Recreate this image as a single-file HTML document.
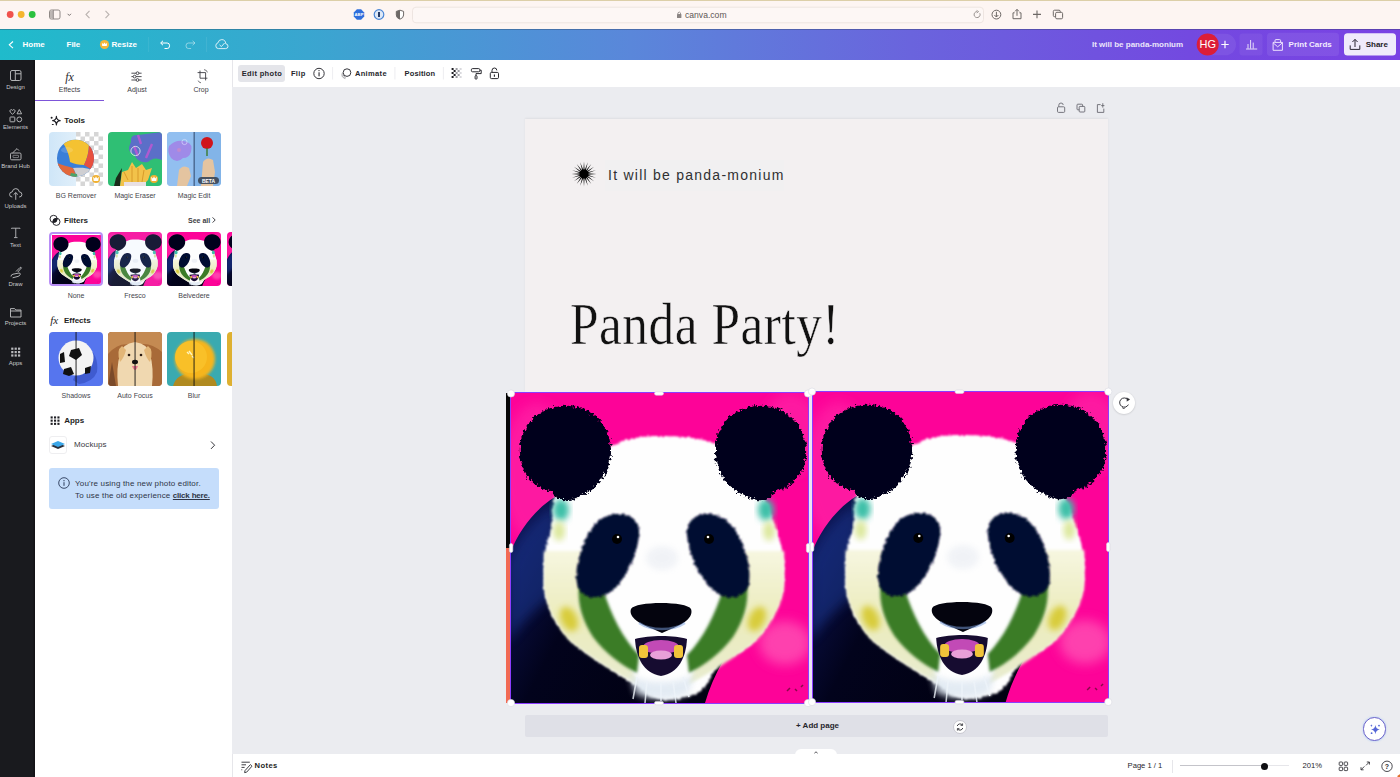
<!DOCTYPE html>
<html><head><meta charset="utf-8">
<style>
*{box-sizing:border-box;margin:0;padding:0}
html,body{width:1400px;height:777px;overflow:hidden;background:#ebecf0;font-family:"Liberation Sans",sans-serif}
.a{position:absolute}
svg{position:absolute;overflow:visible}
#safari{left:0;top:0;width:1400px;height:29px;background:#fdf5f2;border-top:1px solid #dccfa8}
#hdr{left:0;top:29px;width:1400px;height:31px;box-shadow:inset 0 1px 0 rgba(40,60,90,.35);background:linear-gradient(90deg,#1fbbcb 0%,#3aa6d0 22%,#5a87da 45%,#6a64dd 65%,#7349e0 85%,#7a42e4 100%)}
#rail{left:0;top:60px;width:35px;height:717px;background:#191a1e;box-shadow:inset -1.5px 0 0 #131216}
#panel{left:35px;top:60px;width:197px;height:717px;background:#fff}
#ctx{left:232px;top:60px;width:1168px;height:27px;background:#fff;border-left:1px solid #e6e6ea}
#bottom{left:232px;top:754px;width:1168px;height:23px;background:#fff;border-left:1px solid #e6e6ea}
#page{left:525px;top:119px;width:583px;height:273px;background:#f3f0f1;box-shadow:0 -1px 2px rgba(0,0,0,.06)}
.t{position:absolute;white-space:nowrap;line-height:1}
.hw{color:#fff;font-weight:bold;font-size:8px}
.rl{color:#c9cacd;font-size:6px;text-align:center;width:31px;left:0}
.tab{color:#3d3d44;font-size:7px;text-align:center}
.h{color:#1e1e24;font-weight:bold;font-size:8px}
.lb{color:#45454c;font-size:7px;text-align:center;width:54px}
.th{position:absolute;width:54px;height:54px;border-radius:4px;overflow:hidden}
.tb{color:#26262c;font-weight:bold;font-size:7.5px;letter-spacing:0.35px}
</style></head><body>
<svg width="0" height="0" style="position:absolute;left:0;top:0">
<defs>
 <filter id="fur" x="-15%" y="-15%" width="130%" height="130%"><feTurbulence type="fractalNoise" baseFrequency="0.35" numOctaves="2" seed="3" result="n"/><feDisplacementMap in="SourceGraphic" in2="n" scale="7" xChannelSelector="R" yChannelSelector="G"/><feGaussianBlur stdDeviation="0.7"/></filter>
 <filter id="fur2" x="-15%" y="-15%" width="130%" height="130%"><feTurbulence type="fractalNoise" baseFrequency="0.3" numOctaves="2" seed="5" result="n"/><feDisplacementMap in="SourceGraphic" in2="n" scale="4" xChannelSelector="R" yChannelSelector="G"/><feGaussianBlur stdDeviation="1"/></filter>
 <filter id="fz" x="-10%" y="-10%" width="120%" height="120%"><feGaussianBlur stdDeviation="1.6"/></filter>
 <filter id="fz2" x="-20%" y="-20%" width="140%" height="140%"><feGaussianBlur stdDeviation="3"/></filter>
 <filter id="fz6" x="-30%" y="-30%" width="160%" height="160%"><feGaussianBlur stdDeviation="6"/></filter>
 <linearGradient id="bodyG" x1="0" y1="0" x2="1" y2="0.5">
  <stop offset="0" stop-color="#121c66"/><stop offset="0.15" stop-color="#0a1048"/><stop offset="0.45" stop-color="#02031c"/><stop offset="1" stop-color="#010112"/>
 </linearGradient>
 <linearGradient id="chkL" x1="0" y1="0" x2="0.6" y2="1">
  <stop offset="0" stop-color="#eef0c0"/><stop offset="0.35" stop-color="#dcd878"/><stop offset="0.55" stop-color="#b8c040"/><stop offset="0.75" stop-color="#3f8a2c"/><stop offset="1" stop-color="#d8e8c8"/>
 </linearGradient>
 <linearGradient id="chkR" x1="1" y1="0" x2="0.4" y2="1">
  <stop offset="0" stop-color="#eef0c0"/><stop offset="0.35" stop-color="#dcd878"/><stop offset="0.55" stop-color="#b8c040"/><stop offset="0.75" stop-color="#3f8a2c"/><stop offset="1" stop-color="#d8e8c8"/>
 </linearGradient>
 <linearGradient id="paleG" x1="0" y1="0" x2="0" y2="1">
  <stop offset="0" stop-color="#f6f6e0"/><stop offset="0.5" stop-color="#ececbc"/><stop offset="1" stop-color="#e8ecd0"/>
 </linearGradient>
 <symbol id="panda" viewBox="0 0 297 310" preserveAspectRatio="none">
  <rect width="297" height="310" fill="#fd0398"/>
  <ellipse cx="26" cy="80" rx="36" ry="70" fill="#ff34ac" filter="url(#fz6)" opacity=".45"/>
  <ellipse cx="280" cy="40" rx="30" ry="40" fill="#ff34ac" filter="url(#fz6)" opacity=".45"/>
  <ellipse cx="274" cy="250" rx="26" ry="22" fill="#ff5cb8" filter="url(#fz6)" opacity=".7"/>
  <!-- body -->
  <path d="M0,158 C8,138 24,116 44,104 L140,240 L205,250 L212,268 C204,282 198,296 194,310 L0,310 Z" fill="url(#bodyG)"/>
  <clipPath id="bodyClip"><path d="M0,158 C8,138 24,116 44,104 L140,240 L205,250 L212,268 C204,282 198,296 194,310 L0,310 Z"/></clipPath>
  <g clip-path="url(#bodyClip)"><path d="M-4,170 C6,146 24,122 46,110 L46,200 C30,210 10,230 -4,250 Z" fill="#2444a8" filter="url(#fz6)" opacity=".45"/></g>
  <!-- face -->
  <path d="M43,106 C60,70 80,56 98,54 C115,45 130,43 149,43 C175,43 195,46 208,52 C235,68 255,100 262,128 C270,145 274,165 273,185 C272,205 266,218 258,228 C248,248 230,262 208,268 C202,280 198,290 190,298 C175,306 160,308 148,306 C138,304 132,300 128,294 C112,284 84,268 58,247 C45,232 36,215 33,195 C32,170 34,150 40,138 C41,125 42,115 43,106 Z" fill="#fefefe" filter="url(#fur2)"/>
  <!-- cheeks -->
  <path d="M33,158 L72,158 C76,190 88,225 110,255 L128,292 C112,284 84,268 58,247 C45,232 36,215 33,195 Z" fill="url(#paleG)" filter="url(#fz)"/>
  <path d="M273,158 L232,158 C228,190 216,225 194,255 L176,292 C192,284 220,268 246,247 C259,232 270,215 273,195 Z" fill="url(#paleG)" filter="url(#fz)"/>
  <ellipse cx="58" cy="226" rx="8" ry="13" fill="#d8cc3a" filter="url(#fz2)" transform="rotate(-25 58 226)"/>
  <ellipse cx="246" cy="226" rx="8" ry="13" fill="#d8cc3a" filter="url(#fz2)" transform="rotate(25 246 226)"/>
  <path d="M68,192 L92,196 C100,222 112,246 128,262 L126,280 C110,272 94,260 82,244 C72,228 66,212 68,192 Z" fill="#3a7c28" filter="url(#fz)"/>
  <path d="M236,192 L212,196 C204,222 192,246 176,262 L178,280 C194,272 210,260 222,244 C232,228 238,212 236,192 Z" fill="#3a7c28" filter="url(#fz)"/>
  <ellipse cx="50" cy="117" rx="8" ry="11" fill="#3cc0a8" filter="url(#fz2)"/>
  <ellipse cx="48" cy="138" rx="6" ry="10" fill="#dce89c" filter="url(#fz2)"/>
  <ellipse cx="255" cy="117" rx="8" ry="11" fill="#3cc0a8" filter="url(#fz2)"/>
  <ellipse cx="258" cy="138" rx="6" ry="10" fill="#dce89c" filter="url(#fz2)"/>
  <!-- ears -->
  <path d="M9,62 C7,32 30,11 58,13 C84,15 100,34 100,58 C100,80 86,98 62,106 C50,110 44,104 40,98 C22,94 11,82 9,62 Z" fill="#04041a" filter="url(#fur)"/>
  <path d="M295,62 C297,32 274,11 246,13 C220,15 204,34 204,58 C204,80 218,98 242,106 C254,110 260,104 264,98 C282,94 293,82 295,62 Z" fill="#04041a" filter="url(#fur)"/>
  <!-- eye patches -->
  <path d="M100,122 C116,118 130,126 128,142 C126,162 116,186 98,200 C88,207 72,206 67,194 C62,178 70,150 82,134 C88,126 94,123 100,122 Z" fill="#050830" filter="url(#fur2)"/>
  <path d="M204,122 C188,118 174,126 176,142 C178,162 188,186 206,200 C216,207 232,206 237,194 C242,178 234,150 222,134 C216,126 210,123 204,122 Z" fill="#050830" filter="url(#fur2)"/>
  <circle cx="106" cy="146" r="5" fill="#000"/><circle cx="107" cy="144" r="1.3" fill="#fff"/>
  <circle cx="198" cy="146" r="5" fill="#000"/><circle cx="197" cy="144" r="1.3" fill="#fff"/>
  <!-- muzzle shading -->
  <ellipse cx="151" cy="165" rx="16" ry="12" fill="#e4e8f0" filter="url(#fz2)" opacity=".5"/>
  <!-- nose -->
  <path d="M120,216 C124,208 176,208 180,216 C183,224 172,232 160,236 L151,240 L142,236 C130,232 117,224 120,216 Z" fill="#04040e"/>
  <path d="M128,230 C140,238 162,238 174,230" fill="none" stroke="#7aa0e0" stroke-width="2.5" opacity=".5"/>
  <!-- mouth -->
  <path d="M124,246 C138,242 164,242 176,246 C175,264 168,280 150,283 C132,280 125,264 124,246 Z" fill="#160c30"/>
  <ellipse cx="150" cy="254" rx="18" ry="7" fill="#c24ab6"/>
  <rect x="128" y="252" width="9" height="13" rx="3" fill="#f0c43a"/>
  <rect x="163" y="252" width="9" height="13" rx="3" fill="#f0c43a"/>
  <ellipse cx="150" cy="262" rx="11" ry="4.5" fill="#e8a0d8"/>
  <path d="M118,280 C130,292 170,292 184,280 L178,300 C165,308 135,308 124,300 Z" fill="#dfe8f2" filter="url(#fz2)" opacity=".85"/>
  <path d="M126,284 L122,306 M136,288 L134,310 M150,290 L150,308 M162,288 L165,310 M172,284 L178,304" stroke="#eef4fa" stroke-width="1.6" opacity=".8"/>
  <path d="M276,298 l3,-3 M284,296 l2,2 M290,294 l2,-2" stroke="#8a0848" stroke-width="1.5"/>
 </symbol>
</defs>
</svg>

<!-- SAFARI -->
<div id="safari" class="a"></div>
<svg width="1400" height="29" style="left:0;top:0">
 <circle cx="10.2" cy="14.5" r="3.4" fill="#f0524d"/>
 <circle cx="21.2" cy="14.5" r="3.4" fill="#f4b52e"/>
 <circle cx="32.2" cy="14.5" r="3.4" fill="#2bc13f"/>
 <rect x="49.5" y="10" width="10.5" height="9" rx="1.8" fill="none" stroke="#8e8885" stroke-width="1"/>
 <rect x="50" y="10.5" width="3" height="8" fill="#bdb7b4"/>
 <line x1="53.3" y1="10" x2="53.3" y2="19" stroke="#8e8885" stroke-width="1"/>
 <path d="M67.6 13.8 L69.3 15.5 L71 13.8" fill="none" stroke="#7a7472" stroke-width="1"/>
 <path d="M89.5 10.8 L86 14.5 L89.5 18.2" fill="none" stroke="#bab3b0" stroke-width="1.1"/>
 <path d="M105.5 10.8 L109 14.5 L105.5 18.2" fill="none" stroke="#bab3b0" stroke-width="1.1"/>
 <polygon points="356.9,9.3 361.1,9.3 364.2,12.4 364.2,16.6 361.1,19.7 356.9,19.7 353.8,16.6 353.8,12.4" fill="#2f6fdc"/>
 <text x="359" y="16.1" font-size="4.2" font-weight="bold" fill="#fff" text-anchor="middle" font-family="Liberation Sans">ABP</text>
 <circle cx="379" cy="14.5" r="4.8" fill="#dde8f7" stroke="#4a86d6" stroke-width="1.2"/>
 <rect x="378" y="12" width="2" height="5" fill="#243a66"/>
 <path d="M396.3 11.4 L400 10.2 L403.6 11.4 L403.6 15 Q403.6 18 400 19.2 Q396.3 18 396.3 15 Z" fill="#fff" stroke="#6d6866" stroke-width="1"/>
 <path d="M396.3 11.4 L400 10.2 L400 19.2 Q396.3 18 396.3 15 Z" fill="#6d6866"/>
 <rect x="412.5" y="7.2" width="571" height="15.6" rx="3.5" fill="#fdf7f5" stroke="#ece3df" stroke-width="0.9"/>
 <rect x="677" y="13.9" width="4.4" height="4" rx="0.5" fill="#8a8482"/>
 <path d="M677.9 14 V12.9 Q679.2 11 680.5 12.9 V14" fill="none" stroke="#8a8482" stroke-width="0.8"/>
 <path d="M979.8 13.3 A3 3 0 1 1 977 11.6" fill="none" stroke="#8e8885" stroke-width="0.9"/>
 <path d="M976.6 10.4 L978.6 11.6 L976.8 13" fill="none" stroke="#8e8885" stroke-width="0.8"/>
 <circle cx="996.4" cy="14.6" r="4.4" fill="none" stroke="#6d6866" stroke-width="1"/>
 <path d="M996.4 11.8 V17 M994.4 15 L996.4 17 L998.4 15" fill="none" stroke="#6d6866" stroke-width="1"/>
 <path d="M1014.6 12.8 H1013 V18.7 H1021 V12.8 H1019.4" fill="none" stroke="#6d6866" stroke-width="1"/>
 <path d="M1017 15.8 V9.4 M1015 11.4 L1017 9.4 L1019 11.4" fill="none" stroke="#6d6866" stroke-width="1"/>
 <path d="M1033 14.4 H1041 M1037 10.6 V18.2" fill="none" stroke="#6d6866" stroke-width="1.1"/>
 <rect x="1053.3" y="10.2" width="7" height="6.5" rx="1.3" fill="none" stroke="#6d6866" stroke-width="1"/>
 <rect x="1055.6" y="12.3" width="7" height="6.5" rx="1.3" fill="#fdf5f2" stroke="#6d6866" stroke-width="1"/>
</svg>
<div class="t" style="left:685px;top:11.2px;font-size:8.6px;color:#5d5755">canva.com</div>
<!-- HEADER -->
<div id="hdr" class="a"></div>
<svg width="1400" height="31" style="left:0;top:29px">
 <path d="M13 12.5 L9.3 15.8 L13 19.1" fill="none" stroke="#fff" stroke-width="1.1"/>
 <circle cx="104.5" cy="15.5" r="4.6" fill="#f3b73a"/>
 <path d="M102.2 17 L101.9 13.9 L103.4 15 L104.5 13.4 L105.6 15 L107.1 13.9 L106.8 17 Z" fill="#fff"/>
 <line x1="148.6" y1="8" x2="148.6" y2="23" stroke="rgba(255,255,255,.1)" stroke-width="0.8"/>
 <path d="M161 14 H167.2 Q169.6 14 169.6 16.8 Q169.6 19.5 167.2 19.5 H164.5" fill="none" stroke="#fff" stroke-width="1"/>
 <path d="M163 11.8 L160.6 14 L163 16.2" fill="none" stroke="#fff" stroke-width="1"/>
 <path d="M194.6 14 H188.4 Q186 14 186 16.8 Q186 19.5 188.4 19.5 H191.1" fill="none" stroke="rgba(255,255,255,.45)" stroke-width="1"/>
 <path d="M192.6 11.8 L195 14 L192.6 16.2" fill="none" stroke="rgba(255,255,255,.45)" stroke-width="1"/>
 <line x1="206.5" y1="8" x2="206.5" y2="23" stroke="rgba(255,255,255,.1)" stroke-width="0.8"/>
 <path d="M218.5 19.6 H225.6 Q228 19.6 228 17.2 Q228 15 225.8 14.8 Q225.4 10.6 221.8 10.6 Q218.6 10.6 218 13.8 Q215.8 14.3 215.8 16.8 Q215.8 19.6 218.5 19.6 Z" fill="none" stroke="rgba(255,255,255,.85)" stroke-width="0.95"/>
 <path d="M219.5 15.8 L221.4 17.6 L224.6 14" fill="none" stroke="rgba(255,255,255,.85)" stroke-width="0.95"/>
 <rect x="1199" y="4.8" width="37" height="21.5" rx="10.7" fill="rgba(255,255,255,.07)"/>
 <circle cx="1207.7" cy="15.5" r="11" fill="#dc1d38"/>
 <path d="M1221.3 15.5 H1228.7 M1225 11.8 V19.2" stroke="#fff" stroke-width="1.2"/>
 <rect x="1239.5" y="4.5" width="23" height="22" rx="3" fill="rgba(255,255,255,.06)"/>
 <path d="M1246 20 H1257.2 M1248 19.6 V15 M1250.6 19.6 V11 M1253.2 19.6 V13.6" fill="none" stroke="rgba(255,255,255,.85)" stroke-width="0.95"/>
 <rect x="1267" y="3.8" width="72" height="23.2" rx="3.5" fill="rgba(255,255,255,.08)"/>
 <path d="M1274.6 13.4 H1282.4 V21.3 H1273.1 V13.4 Z M1273.1 13.8 L1277.7 17.8 L1282.4 13.8" fill="none" stroke="#f2e8ff" stroke-width="0.95"/>
 <path d="M1275 13.2 V11.6 Q1275 10.6 1276 10.6 H1279.6 Q1280.6 10.6 1280.6 11.6 V13.2" fill="none" stroke="#f2e8ff" stroke-width="0.95"/>
 <rect x="1344" y="4.3" width="52" height="22.3" rx="3.5" fill="#f0eafb"/>
 <path d="M1350.2 16.4 V20.4 H1359.8 V16.4" fill="none" stroke="#2a2533" stroke-width="1"/>
 <path d="M1355 18 V10.4 M1352.4 13 L1355 10.4 L1357.6 13" fill="none" stroke="#2a2533" stroke-width="1"/>
</svg>
<div class="t hw" style="left:22.5px;top:40.6px">Home</div>
<div class="t hw" style="left:66.5px;top:40.6px">File</div>
<div class="t hw" style="left:111.5px;top:40.6px">Resize</div>
<div class="t hw" style="left:1092px;top:40.6px;color:#ece6fb">It will be panda-monium</div>
<div class="t" style="left:1197px;top:39.3px;width:21.5px;text-align:center;color:#fff;font-size:11px">HG</div>
<div class="t hw" style="left:1288.6px;top:40.6px;color:#f3ecff">Print Cards</div>
<div class="t hw" style="left:1365.7px;top:40.6px;color:#1f1b28">Share</div>
<!-- RAIL -->
<div id="rail" class="a"></div>
<svg width="35" height="300" style="left:0;top:60px">
 <g fill="none" stroke="#b9babd" stroke-width="0.95">
  <rect x="10.5" y="10.5" width="10.5" height="10" rx="1.5"/>
  <path d="M15.3 10.5 V20.5 M15.3 13.8 H21"/>
  <g transform="translate(0 2)">
  <path d="M12.5 52.3 L10.2 50 Q9.4 48.6 10.6 47.8 Q11.8 47.2 12.5 48.4 Q13.2 47.2 14.4 47.8 Q15.6 48.6 14.8 50 Z"/>
  <path d="M19.3 47.5 L21.6 51.8 H17 Z"/>
  <rect x="10" y="55" width="4.8" height="4.8" rx="0.6"/>
  <circle cx="19.3" cy="57.4" r="2.4"/>
  </g>
  <rect x="10.5" y="93" width="10.5" height="6.8" rx="1.2"/>
  <path d="M12.5 93 L17 88.6 L19 90.6"/>
  <rect x="13" y="95.3" width="5.5" height="2.3" rx="0.4" stroke-width="0.6"/>
  <path d="M12.3 137 Q9.6 137 9.6 134.5 Q9.6 132 12.2 131.9 Q12.8 128.6 15.8 128.6 Q18.8 128.6 19.3 131.9 Q21.9 132 21.9 134.5 Q21.9 137 19.2 137"/>
  <path d="M15.75 139.8 V132.6 M13.6 134.6 L15.75 132.6 L17.9 134.6"/>
  <path d="M11.5 168.8 V168.2 H20 V168.8 M15.75 168.2 V177.6 M14 177.6 H17.5" stroke-width="0.9"/>
  <path d="M11 216.5 Q11 214.5 13 214.2 L19 213 Q20.6 213 20.2 214.6 Q19.6 216 18 216.4 L12.6 217.8" stroke-width="0.95"/>
  <path d="M16 211.5 L20 207.5 Q21 207 21.5 207.8 L17.8 212"/>
  <path d="M10.5 257 V248.6 H14.6 L15.8 250 H21 V257 Z M10.5 251 H21"/>
 </g>
 <g fill="#b9babd">
  <rect x="11.2" y="287.6" width="2.2" height="2.2"/><rect x="14.6" y="287.6" width="2.2" height="2.2"/><rect x="18" y="287.6" width="2.2" height="2.2"/>
  <rect x="11.2" y="291" width="2.2" height="2.2"/><rect x="14.6" y="291" width="2.2" height="2.2"/><rect x="18" y="291" width="2.2" height="2.2"/>
  <rect x="11.2" y="294.4" width="2.2" height="2.2"/><rect x="14.6" y="294.4" width="2.2" height="2.2"/><rect x="18" y="294.4" width="2.2" height="2.2"/>
 </g>
</svg>
<div class="t rl" style="top:83.8px">Design</div>
<div class="t rl" style="top:123.6px">Elements</div>
<div class="t rl" style="top:162.9px">Brand Hub</div>
<div class="t rl" style="top:202.8px">Uploads</div>
<div class="t rl" style="top:241.8px">Text</div>
<div class="t rl" style="top:281px">Draw</div>
<div class="t rl" style="top:320.4px">Projects</div>
<div class="t rl" style="top:360.2px">Apps</div>
<!-- PANEL -->
<div id="panel" class="a"></div>
<div class="a" style="left:35px;top:100px;width:69px;height:1.4px;background:#7d55d9"></div>
<svg width="200" height="380" style="left:35px;top:60px">
 <text x="34.5" y="20.5" font-family="Liberation Serif" font-style="italic" font-size="12" fill="#2a2a30" text-anchor="middle">fx</text>
 <g fill="none" stroke="#3d3d44" stroke-width="0.9">
  <path d="M96.4 13.2 H106.6 M96.4 16.6 H106.6 M96.4 20 H106.6"/>
  <circle cx="102.5" cy="13.2" r="1.4" fill="#fff"/><circle cx="99.6" cy="16.6" r="1.4" fill="#fff"/><circle cx="102.5" cy="20" r="1.4" fill="#fff"/>
  <path d="M162.6 12.6 H170.6 V20.4 M165 10.6 V18.2 H172.4"/>
  <path d="M169 9.6 Q172 10 172.4 12.4 M163.2 20.6 Q163.8 22.6 166 22.8" stroke-width="0.7"/>
 </g>
 <path d="M21.4 56.2 Q21.6 60.4 25.2 60.6 Q21.6 60.8 21.4 65 Q21.2 60.8 17.6 60.6 Q21.2 60.4 21.4 56.2 Z" fill="none" stroke="#1e1e24" stroke-width="1.1" stroke-linejoin="round"/>
 <circle cx="16.6" cy="57.7" r="1" fill="#1e1e24"/><rect x="16.8" y="63.9" width="2" height="1.2" rx="0.6" fill="#1e1e24"/>
 <clipPath id="fc1"><circle cx="18.6" cy="158.9" r="3.6"/></clipPath>
 <circle cx="21.4" cy="161.8" r="3.6" fill="#1e1e24" clip-path="url(#fc1)"/>
 <g fill="none" stroke="#1e1e24" stroke-width="0.95">
  <circle cx="18.6" cy="158.9" r="3.6"/><circle cx="21.4" cy="161.8" r="3.6"/>
 </g>
 <text x="15.2" y="264.2" font-family="Liberation Serif" font-style="italic" font-size="11" fill="#1e1e24">fx</text>
 <g fill="#1e1e24">
  <rect x="15.6" y="356.4" width="2.1" height="2.1"/><rect x="19" y="356.4" width="2.1" height="2.1"/><rect x="22.4" y="356.4" width="2.1" height="2.1"/>
  <rect x="15.6" y="359.6" width="2.1" height="2.1"/><rect x="19" y="359.6" width="2.1" height="2.1"/><rect x="22.4" y="359.6" width="2.1" height="2.1"/>
  <rect x="15.6" y="362.8" width="2.1" height="2.1"/><rect x="19" y="362.8" width="2.1" height="2.1"/><rect x="22.4" y="362.8" width="2.1" height="2.1"/>
 </g>
 <path d="M177.6 157.4 L180.2 160 L177.6 162.6" fill="none" stroke="#2a2a30" stroke-width="0.9"/>
</svg>
<div class="t tab" style="left:50px;width:39px;top:86.3px">Effects</div>
<div class="t tab" style="left:117px;width:40px;top:86.3px">Adjust</div>
<div class="t tab" style="left:181px;width:40px;top:86.3px">Crop</div>
<div class="t h" style="left:64.3px;top:116.8px">Tools</div>
<div class="t h" style="left:64px;top:216.6px">Filters</div>
<div class="t" style="left:188px;top:217px;font-size:7px;color:#3d3d44;font-weight:bold">See all</div>
<div class="t h" style="left:64px;top:316.6px">Effects</div>
<div class="t h" style="left:64.2px;top:416.6px">Apps</div>
<!-- tool thumbs -->
<div class="th" style="left:49px;top:132px;background:linear-gradient(90deg,#cfe6f8 0,#e0effa 50%,#fff 50%)">
 <svg width="54" height="54" style="left:0;top:0">
  <g fill="#d6d6d6">
   <rect x="27" y="0" width="4.5" height="4.5"/><rect x="36" y="0" width="4.5" height="4.5"/><rect x="45" y="0" width="4.5" height="4.5"/>
   <rect x="31.5" y="4.5" width="4.5" height="4.5"/><rect x="40.5" y="4.5" width="4.5" height="4.5"/><rect x="49.5" y="4.5" width="4.5" height="4.5"/>
   <rect x="27" y="9" width="4.5" height="4.5"/><rect x="36" y="9" width="4.5" height="4.5"/><rect x="45" y="9" width="4.5" height="4.5"/>
   <rect x="31.5" y="13.5" width="4.5" height="4.5"/><rect x="40.5" y="13.5" width="4.5" height="4.5"/><rect x="49.5" y="13.5" width="4.5" height="4.5"/>
   <rect x="27" y="18" width="4.5" height="4.5"/><rect x="36" y="18" width="4.5" height="4.5"/><rect x="45" y="18" width="4.5" height="4.5"/>
   <rect x="31.5" y="22.5" width="4.5" height="4.5"/><rect x="40.5" y="22.5" width="4.5" height="4.5"/><rect x="49.5" y="22.5" width="4.5" height="4.5"/>
   <rect x="27" y="27" width="4.5" height="4.5"/><rect x="36" y="27" width="4.5" height="4.5"/><rect x="45" y="27" width="4.5" height="4.5"/>
   <rect x="31.5" y="31.5" width="4.5" height="4.5"/><rect x="40.5" y="31.5" width="4.5" height="4.5"/><rect x="49.5" y="31.5" width="4.5" height="4.5"/>
   <rect x="27" y="36" width="4.5" height="4.5"/><rect x="36" y="36" width="4.5" height="4.5"/><rect x="45" y="36" width="4.5" height="4.5"/>
   <rect x="31.5" y="40.5" width="4.5" height="4.5"/><rect x="40.5" y="40.5" width="4.5" height="4.5"/><rect x="49.5" y="40.5" width="4.5" height="4.5"/>
   <rect x="27" y="45" width="4.5" height="4.5"/><rect x="36" y="45" width="4.5" height="4.5"/><rect x="45" y="45" width="4.5" height="4.5"/>
   <rect x="31.5" y="49.5" width="4.5" height="4.5"/><rect x="40.5" y="49.5" width="4.5" height="4.5"/><rect x="49.5" y="49.5" width="4.5" height="4.5"/>
  </g>
  <clipPath id="ballc"><circle cx="26.5" cy="26.2" r="18.5"/></clipPath>
  <g clip-path="url(#ballc)">
   <rect x="0" y="0" width="54" height="54" fill="#3a7fd8"/>
   <path d="M12,9 C20,3 34,4 40,12 C40,20 38,27 35,33 C30,33 25,32 21,30 C20,22 17,14 12,9 Z" fill="#f4c232"/>
   <path d="M40,12 C46,18 47,30 43,38 C40,36 37,34 35,33 C38,27 40,20 40,12 Z" fill="#e8503e"/>
   <path d="M6,30 C12,33 18,34 24,36 C26,40 28,44 27,48 C16,48 8,40 6,30 Z" fill="#e2683a"/>
   <path d="M24,36 C30,36 36,35 42,38 C40,42 34,46 28,46 C27,42 26,39 24,36 Z" fill="#cfcfd2"/>
   <path d="M22,41 L28,42 L29,48 L20,47 Z" fill="#4aa46a"/>
   <ellipse cx="18" cy="18" rx="6" ry="3" fill="#fff" opacity=".15"/>
  </g>
  <circle cx="47" cy="47" r="4" fill="#f0b030"/>
  <path d="M44.7 49 L44.1 44.8 L45.9 46.4 L47 44.2 L48.1 46.4 L49.9 44.8 L49.3 49 Z" fill="#fff"/>
 </svg>
</div>
<div class="th" style="left:108px;top:132px;background:#2fbf74">
 <svg width="54" height="54" style="left:0;top:0">
  <path d="M23 10 Q22 2 30 3 L54 0 L54 28 Q46 24 40 30 Q30 32 26 22 Q18 20 23 10 Z" fill="#5b6fc8"/>
  <path d="M30 3 L33 12 M44 12 L38 26 M26 14 L30 24" stroke="#b05ad0" stroke-width="2.4"/>
  <circle cx="27.5" cy="19" r="4.6" fill="none" stroke="#e6f6ee" stroke-width="0.8"/>
  <path d="M8 46 L14 36 L12 54 L6 54 Z" fill="#1a2a1a"/>
  <path d="M12 54 L14 40 L20 38 L24 30 L28 36 L34 32 L38 38 L44 36 L40 48 L34 54 Z" fill="#f2c24a"/>
  <path d="M16 40 L20 48 M24 34 L24 50 M30 36 L30 52 M36 38 L34 50" stroke="#d89a2a" stroke-width="1"/>
  <rect x="16" y="50" width="22" height="4" fill="#e8e0e4"/>
  <circle cx="46" cy="47" r="4" fill="#f0b030"/>
  <path d="M43.7 49 L43.1 44.8 L44.9 46.4 L46 44.2 L47.1 46.4 L48.9 44.8 L48.3 49 Z" fill="#fff"/>
 </svg>
</div>
<div class="th" style="left:167px;top:132px;background:#8ec0ee">
 <svg width="54" height="54" style="left:0;top:0">
  <rect x="0" y="0" width="27" height="54" fill="#92bff0"/>
  <rect x="27" y="0" width="27" height="54" fill="#82b4e8"/>
  <path d="M2 14 Q10 6 20 10 Q26 12 24 20 Q22 26 16 26 Q10 32 4 26 Q0 20 2 14 Z" fill="#9f8ae8"/>
  <circle cx="12" cy="18" r="2" fill="#c08ad0"/>
  <circle cx="17.5" cy="10" r="2.6" fill="none" stroke="#e0e0ff" stroke-width="0.6"/>
  <path d="M10 54 L12 38 Q16 32 22 36 L24 44 L20 54 Z" fill="#e4c4a0"/>
  <rect x="26.7" y="0" width="0.8" height="54" fill="#1a2a4a"/>
  <circle cx="40" cy="11" r="6" fill="#d0141a"/>
  <path d="M40 16 V24" stroke="#3a7a30" stroke-width="1.4"/>
  <path d="M34 54 L36 30 Q40 24 46 28 L48 40 L46 54 Z" fill="#e4c4a0"/>
  <rect x="31" y="45" width="21" height="7" rx="3.5" fill="#3c4858" opacity=".92"/>
  <text x="41.5" y="50.6" font-size="5" font-weight="bold" fill="#fff" text-anchor="middle" font-family="Liberation Sans">BETA</text>
 </svg>
</div>
<div class="t lb" style="left:49px;top:191.6px">BG Remover</div>
<div class="t lb" style="left:108px;top:191.6px">Magic Eraser</div>
<div class="t lb" style="left:167px;top:191.6px">Magic Edit</div>
<!-- filter thumbs -->
<div class="th" style="left:49px;top:232px;border-radius:4px;background:#fff;border:2px solid #b88ef6"><svg width="49" height="49" style="left:0.5px;top:0.5px"><use href="#panda" width="49" height="49"/></svg></div>
<div class="th" style="left:108px;top:232px"><svg width="54" height="54" style="left:0;top:0"><use href="#panda" width="54" height="54"/></svg><div class="a" style="left:0;top:0;width:54px;height:54px;background:rgba(200,220,255,.12)"></div></div>
<div class="th" style="left:167px;top:232px"><svg width="54" height="54" style="left:0;top:0"><use href="#panda" width="54" height="54"/></svg></div>
<div class="th" style="left:227px;top:232px;width:5px;border-radius:4px 0 0 4px"><svg width="54" height="54" style="left:0;top:0"><use href="#panda" width="54" height="54"/></svg></div>
<div class="t lb" style="left:49px;top:291.6px">None</div>
<div class="t lb" style="left:108px;top:291.6px">Fresco</div>
<div class="t lb" style="left:167px;top:291.6px">Belvedere</div>
<!-- effect thumbs -->
<div class="th" style="left:49px;top:332px;background:#5675ee">
 <svg width="54" height="54" style="left:0;top:0">
  <path d="M38 16 Q50 22 48 40 Q44 50 30 52 L24 48 Z" fill="#3f5bd0"/>
  <circle cx="27" cy="26" r="17.5" fill="#f4f4f4"/>
  <path d="M22 18 L30 16 L33 23 L27 28 L20 24 Z" fill="#111"/>
  <path d="M11 22 L15 20 L16 30 L11 31 Z" fill="#111"/>
  <path d="M15 37 L22 35 L25 42 L20 44 L14 42 Z" fill="#111"/>
  <path d="M36 36 L42 34 L41 41 L36 42 Z" fill="#111"/>
  <rect x="26.6" y="0" width="0.9" height="54" fill="#111"/>
 </svg>
</div>
<div class="th" style="left:108px;top:332px;background:#b8743a">
 <svg width="54" height="54" style="left:0;top:0">
  <rect x="0" y="0" width="54" height="54" fill="#a86a38"/>
  <path d="M0 0 H54 V20 Q40 8 27 14 Q12 8 0 22 Z" fill="#c48a52"/>
  <path d="M4 30 L0 54 H8 Z" fill="#7a4a2a"/>
  <path d="M10 54 Q8 36 12 22 Q14 12 27 10 Q40 12 42 22 Q46 36 44 54 Z" fill="#f0d8b0"/>
  <path d="M14 14 Q8 18 12 30 Q16 26 18 18 Z M40 14 Q46 18 42 30 Q38 26 36 18 Z" fill="#e2b678"/>
  <circle cx="21" cy="23" r="1.3" fill="#2a1a10"/><circle cx="33" cy="23" r="1.3" fill="#2a1a10"/>
  <ellipse cx="27" cy="30" rx="3" ry="2.2" fill="#111"/>
  <path d="M24 34 Q27 42 30 34 Z" fill="#e87890"/>
  <rect x="26.6" y="0" width="0.9" height="54" fill="#111"/>
 </svg>
</div>
<div class="th" style="left:167px;top:332px;background:#3aaab0">
 <svg width="54" height="54" style="left:0;top:0">
  <path d="M6 54 Q10 40 28 42 Q48 40 50 54 Z" fill="#b08a20"/>
  <circle cx="28" cy="27" r="20" fill="#f6b51c" filter="url(#fz)"/>
  <circle cx="24" cy="25" r="16" fill="#f9c028"/>
  <path d="M20 20 L22 22 M22 19 L25 23 M25 24 L27 26" stroke="#fff4c0" stroke-width="1.4"/>
  <rect x="26.6" y="0" width="0.9" height="54" fill="#111"/>
 </svg>
</div>
<div class="th" style="left:227px;top:332px;width:5px;background:#deb030;border-radius:4px 0 0 4px"></div>
<div class="t lb" style="left:49px;top:391.6px">Shadows</div>
<div class="t lb" style="left:108px;top:391.6px">Auto Focus</div>
<div class="t lb" style="left:167px;top:391.6px">Blur</div>
<!-- apps -->
<div class="a" style="left:49px;top:436px;width:18px;height:18px;border:0.8px solid #eeeef0;border-radius:3px;background:#fff"></div>
<svg width="20" height="20" style="left:48px;top:435px">
 <path d="M3 11 L10 8 L17 11 L10 14 Z" fill="#2a2e3a"/>
 <path d="M3 9 L10 6 L17 9 L10 12 Z" fill="#3aa6e8"/>
</svg>
<div class="t" style="left:74px;top:440.8px;font-size:8px;letter-spacing:0.1px;color:#3a3a42">Mockups</div>
<svg width="10" height="12" style="left:208px;top:439px"><path d="M3 2.5 L6.6 6.2 L3 9.9" fill="none" stroke="#2a2a30" stroke-width="0.95"/></svg>
<div class="a" style="left:49px;top:468px;width:170px;height:41px;background:#c5ddfb;border-radius:3px"></div>
<svg width="14" height="14" style="left:57px;top:476px"><circle cx="7" cy="7" r="5.3" fill="none" stroke="#2a3a58" stroke-width="0.9"/><rect x="6.5" y="6.2" width="1" height="3.6" fill="#2a3a58"/><circle cx="7" cy="4.7" r="0.65" fill="#2a3a58"/></svg>
<div class="t" style="left:75px;top:479.6px;font-size:8px;letter-spacing:0.17px;color:#2e3546">You're using the new photo editor.</div>
<div class="t" style="left:75px;top:491.8px;font-size:8px;letter-spacing:0.17px;color:#2e3546">To use the old experience <b style="text-decoration:underline;letter-spacing:-0.2px">click here.</b></div>
<!-- CONTEXT TOOLBAR -->
<div id="ctx" class="a"></div>
<div class="a" style="left:237.7px;top:65px;width:47px;height:16.7px;background:#e4e5ea;border-radius:3px"></div>
<div class="t tb" style="left:241.7px;top:70.2px">Edit photo</div>
<div class="t tb" style="left:290.9px;top:70.2px">Flip</div>
<div class="t tb" style="left:354.9px;top:70.2px">Animate</div>
<div class="t tb" style="left:404.6px;top:70.2px;letter-spacing:0.12px">Position</div>
<svg width="300" height="27" style="left:232px;top:60px">
 <circle cx="87" cy="13.5" r="5.2" fill="none" stroke="#2a2a30" stroke-width="0.95"/>
 <rect x="86.5" y="12.3" width="1.1" height="4" fill="#2a2a30"/><circle cx="87" cy="10.6" r="0.7" fill="#2a2a30"/>
 <line x1="100.6" y1="7" x2="100.6" y2="19.5" stroke="#e8e8ec" stroke-width="0.8"/>
 <circle cx="115" cy="12.6" r="3.8" fill="none" stroke="#2a2a30" stroke-width="0.95"/>
 <path d="M111.6 13.6 Q110.6 16.6 113.6 17.6 M110.4 12.8 Q108.8 17.4 113.4 18.6" fill="none" stroke="#7a7a80" stroke-width="0.7"/>
 <line x1="162.9" y1="7" x2="162.9" y2="19.5" stroke="#e8e8ec" stroke-width="0.8"/>
 <line x1="211.4" y1="7" x2="211.4" y2="19.5" stroke="#e8e8ec" stroke-width="0.8"/>
 <g fill="#1e1e24">
  <rect x="219.6" y="8" width="2" height="2"/><rect x="219.6" y="12" width="2" height="2"/><rect x="219.6" y="16" width="2" height="2"/>
  <rect x="221.6" y="10" width="2" height="2"/><rect x="221.6" y="14" width="2" height="2"/>
 </g>
 <g fill="#9a9aa0">
  <rect x="223.6" y="8" width="2" height="2"/><rect x="223.6" y="12" width="2" height="2"/><rect x="223.6" y="16" width="2" height="2"/>
  <rect x="225.6" y="10" width="2" height="2"/><rect x="225.6" y="14" width="2" height="2"/>
 </g>
 <g fill="#d8d8dc">
  <rect x="227.6" y="8" width="2" height="2"/><rect x="227.6" y="12" width="2" height="2"/><rect x="227.6" y="16" width="2" height="2"/>
 </g>
 <g fill="none" stroke="#1e1e24" stroke-width="0.95">
  <rect x="239.4" y="8.6" width="8.4" height="3.2" rx="1.1"/>
  <path d="M247.8 10.2 H249.2 V13.6 H244 V15.6"/>
  <rect x="243.1" y="15.6" width="1.9" height="3.6" rx="0.9"/>
  <rect x="258.3" y="12.4" width="8.2" height="6.2" rx="1.2"/>
  <path d="M260 12.4 V10.6 Q260 8 262.4 8 Q264.8 8 264.8 10.4"/>
  <path d="M262.4 14.6 V16.8" stroke-width="1.1"/>
 </g>
</svg>
<!-- page icons -->
<svg width="60" height="16" style="left:1052px;top:100px">
 <g fill="none" stroke="#6a6a72" stroke-width="0.9">
  <rect x="5.5" y="6.8" width="7.2" height="5.6" rx="1"/>
  <path d="M6.8 6.8 V5.2 Q6.8 3 9 3 Q11.2 3 11.2 5"/>
  <rect x="25" y="4.2" width="5.6" height="5.6" rx="0.8"/>
  <rect x="27.2" y="6.4" width="5.6" height="5.6" rx="0.8" fill="#ebecf0"/>
  <path d="M48.6 4.6 H45.4 V12.4 H51.8 V8.6 M49.2 5.6 H52.4 M50.8 3.2 V7.6"/>
 </g>
</svg>
<!-- PAGE -->
<div id="page" class="a"></div>
<div class="a" style="left:604.5px;top:160px;width:179.5px;height:31px;background:#f1f0f1"></div>
<svg width="30" height="30" style="left:569px;top:159px">
 <polygon points="15.00,2.60 15.63,11.05 18.83,3.21 16.82,11.44 22.29,4.97 17.83,12.17 25.03,7.71 18.56,13.18 26.79,11.17 18.95,14.37 27.40,15.00 18.95,15.63 26.79,18.83 18.56,16.82 25.03,22.29 17.83,17.83 22.29,25.03 16.82,18.56 18.83,26.79 15.63,18.95 15.00,27.40 14.37,18.95 11.17,26.79 13.18,18.56 7.71,25.03 12.17,17.83 4.97,22.29 11.44,16.82 3.21,18.83 11.05,15.63 2.60,15.00 11.05,14.37 3.21,11.17 11.44,13.18 4.97,7.71 12.17,12.17 7.71,4.97 13.18,11.44 11.17,3.21 14.37,11.05" fill="#111"/>
 <circle cx="15" cy="15" r="4.4" fill="#000"/>
</svg>
<div class="t" style="left:608px;top:168.2px;font-size:14px;color:#303032;letter-spacing:1.25px">It will be panda-monium</div>
<div class="t" style="left:570px;top:295.3px;font-family:'Liberation Serif',serif;font-size:59px;color:#111;letter-spacing:0.6px;transform:scaleX(0.87);transform-origin:0 0;-webkit-text-stroke:0.5px #f3f0f1">Panda Party!</div>
<!-- IMAGES -->
<div class="a" style="left:506px;top:393px;width:5px;height:155px;background:#050505"></div>
<div class="a" style="left:506px;top:548px;width:5px;height:155px;background:#f26a54"></div>
<svg width="297" height="310" style="left:511px;top:393px"><use href="#panda" width="297" height="310"/></svg>
<svg width="295" height="310" style="left:813px;top:392px"><use href="#panda" width="295" height="310"/></svg>
<div class="a" style="left:808.5px;top:392px;width:4.5px;height:311px;background:#ede4f4"></div>
<svg width="640" height="340" style="left:490px;top:380px">
 <g fill="none" stroke="#8b3dff" stroke-width="1">
  <rect x="20.5" y="12.5" width="298" height="311"/>
  <rect x="322.5" y="11.5" width="296" height="311"/>
 </g>
 <g fill="#fff" stroke="#d8d8e0" stroke-width="0.6">
  <circle cx="21" cy="13.5" r="3.6"/><circle cx="318" cy="13.5" r="3.6"/><circle cx="21" cy="323" r="3.6"/><circle cx="318" cy="323" r="3.6"/>
  <circle cx="322" cy="11.6" r="3.6"/><circle cx="618.3" cy="11.6" r="3.6"/><circle cx="322" cy="322" r="3.6"/><circle cx="618.3" cy="322" r="3.6"/>
  <rect x="164.5" y="11.8" width="9" height="3.4" rx="1.7"/><rect x="164.5" y="321.4" width="9" height="3.4" rx="1.7"/>
  <rect x="19.4" y="163.5" width="3.4" height="9" rx="1.7"/><rect x="316.4" y="163.5" width="3.4" height="9" rx="1.7"/>
  <rect x="465" y="10" width="9" height="3.4" rx="1.7"/><rect x="465" y="320.4" width="9" height="3.4" rx="1.7"/>
  <rect x="320.4" y="162.5" width="3.4" height="9" rx="1.7"/><rect x="616.6" y="162.5" width="3.4" height="9" rx="1.7"/>
 </g>
</svg>
<div class="a" style="left:1112.8px;top:392px;width:22px;height:22px;border-radius:50%;background:#fff;box-shadow:0 0.5px 2px rgba(0,0,0,.18)"></div>
<svg width="22" height="22" style="left:1112.8px;top:392px">
 <path d="M14.8 7.6 A4.6 4.6 0 1 0 15.4 12.6" fill="none" stroke="#2a2a30" stroke-width="0.95"/>
 <path d="M13.6 5.8 L16.6 7.4 L13.8 9.2" fill="#2a2a30" stroke="#2a2a30" stroke-width="0.6"/>
 <path d="M9.4 15.4 L10.6 17 L12 15.6" fill="none" stroke="#2a2a30" stroke-width="0.8"/>
</svg>
<!-- ADD PAGE -->
<div class="a" style="left:525px;top:714.5px;width:583px;height:22px;background:#dfe0e7;border-radius:2px"></div>
<div class="t" style="left:796px;top:722px;font-size:8px;font-weight:bold;color:#26262c">+ Add page</div>
<div class="a" style="left:952.6px;top:720px;width:14px;height:14px;border-radius:50%;background:#fff;border:0.6px solid #c8c8d0"></div>
<svg width="14" height="14" style="left:952.6px;top:720px">
 <path d="M4.2 6 A3 3 0 0 1 9.4 5 M9.8 8 A3 3 0 0 1 4.6 9" fill="none" stroke="#2a2a30" stroke-width="0.9"/>
 <path d="M9.6 3.4 V5.4 H7.6 M4.4 10.6 V8.6 H6.4" fill="none" stroke="#2a2a30" stroke-width="0.8"/>
</svg>
<!-- magic -->
<div class="a" style="left:1363.3px;top:717.4px;width:23.2px;height:23.2px;border-radius:50%;background:#fff;border:1.2px solid #6e62c8;box-shadow:0 0 2px rgba(120,180,255,.6)"></div>
<svg width="24" height="24" style="left:1363px;top:717px">
 <path d="M12.4 8 Q12.9 12.1 16.8 12.6 Q12.9 13.1 12.4 17.2 Q11.9 13.1 8 12.6 Q11.9 12.1 12.4 8 Z" fill="#5566d6"/>
 <path d="M8.4 7.2 Q8.6 8.4 9.6 8.6 Q8.6 8.8 8.4 10 Q8.2 8.8 7.2 8.6 Q8.2 8.4 8.4 7.2 Z" fill="#5566d6"/>
 <circle cx="16" cy="8.6" r="0.9" fill="#5566d6"/><circle cx="8.6" cy="16.2" r="0.9" fill="#5566d6"/>
</svg>
<!-- BOTTOM -->
<div class="a" style="left:794.6px;top:748.5px;width:42px;height:8px;background:#fff;border-radius:6px 6px 0 0"></div>
<svg width="10" height="6" style="left:811px;top:749px"><path d="M3.4 4.2 L5 2.8 L6.6 4.2" fill="none" stroke="#2a2a30" stroke-width="0.8"/></svg>
<div id="bottom" class="a"></div>
<svg width="20" height="16" style="left:240px;top:759px">
 <path d="M1.5 3.2 H9.8 M1.5 5.8 H6 M1.5 8.4 H4.6" stroke="#2a2a30" stroke-width="0.9"/>
 <path d="M5 11.6 L10.4 5.6 L12 7.2 L6.6 13.2 L4.6 13.6 Z" fill="none" stroke="#2a2a30" stroke-width="0.9"/>
 <circle cx="1.8" cy="10.8" r="0.5" fill="#2a2a30"/>
</svg>
<div class="t" style="left:254.6px;top:762px;font-size:7.6px;font-weight:bold;letter-spacing:0.4px;color:#1e1e24">Notes</div>
<div class="t" style="left:1127.6px;top:762px;font-size:7.6px;color:#26262c">Page 1 / 1</div>
<div class="a" style="left:1171.5px;top:760px;width:0.8px;height:13px;background:#e6e6ea"></div>
<div class="a" style="left:1180.4px;top:765.2px;width:84px;height:1.3px;background:#c4c4ca"></div>
<div class="a" style="left:1264px;top:765.2px;width:25px;height:1.3px;background:#e6e6ea"></div>
<div class="a" style="left:1260.6px;top:762.6px;width:7px;height:7px;border-radius:50%;background:#0e0e12"></div>
<div class="t" style="left:1302.5px;top:762px;font-size:7.6px;color:#26262c">201%</div>
<svg width="60" height="16" style="left:1335px;top:758px">
 <g fill="none" stroke="#2a2a30" stroke-width="0.85">
  <rect x="4.2" y="4" width="3.4" height="3.4" rx="0.7"/><rect x="9.2" y="4" width="3.4" height="3.4" rx="0.7"/>
  <rect x="4.2" y="9.2" width="3.4" height="3.4" rx="0.7"/><rect x="9.2" y="9.2" width="3.4" height="3.4" rx="0.7"/>
  <path d="M26 11.8 L29.4 8.4 M26 9.2 V11.8 H28.6 M34.4 4 L31 7.4 M31.8 4 H34.4 V6.6"/>
  <circle cx="52" cy="8.3" r="5.2"/>
 </g>
 <text x="52" y="10.8" font-size="7" font-weight="bold" fill="#2a2a30" text-anchor="middle" font-family="Liberation Sans">?</text>
</svg>
<div class="a" style="left:1395.5px;top:773px;width:8px;height:8px;background:#e0702a;border-radius:8px 0 0 0"></div>
</body></html>
